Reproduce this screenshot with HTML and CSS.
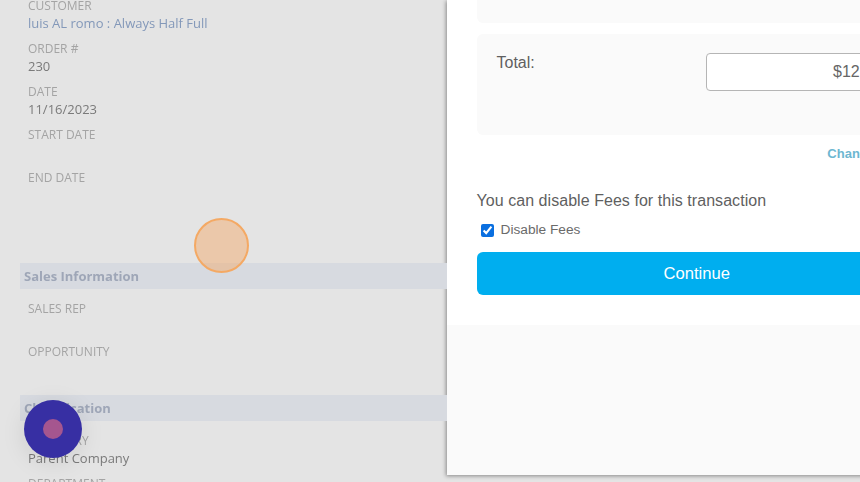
FILE: index.html
```html
<!DOCTYPE html>
<html>
<head>
    <title>Payment</title>
    <link rel="stylesheet" href="styles.css">
</head>
<body>
    <div class="record">
        <div class="field">
            <div class="label">CUSTOMER</div>
            <div class="value link">luis AL romo : Always Half Full</div>
        </div>
        <div class="field">
            <div class="label">ORDER #</div>
            <div class="value">230</div>
        </div>
        <div class="field">
            <div class="label">DATE</div>
            <div class="value">11/16/2023</div>
        </div>
        <div class="field">
            <div class="label">START DATE</div>
            <div class="value"></div>
        </div>
        <div class="field">
            <div class="label">END DATE</div>
            <div class="value"></div>
        </div>
        <div class="section section-first">Sales Information</div>
        <div class="field">
            <div class="label">SALES REP</div>
            <div class="value"></div>
        </div>
        <div class="field">
            <div class="label">OPPORTUNITY</div>
            <div class="value"></div>
        </div>
        <div class="section">Classification</div>
        <div class="field">
            <div class="label">CATEGORY</div>
            <div class="value">Parent Company</div>
        </div>
        <div class="field">
            <div class="label">DEPARTMENT</div>
            <div class="value"></div>
        </div>
    </div>

    <div class="modal">
        <div class="modal-body">
            <div class="panel panel-top"></div>
            <div class="panel panel-total">
                <div class="total-label">Total:</div>
                <input type="text" class="total-input" value="$12.00" readonly>
            </div>
            <div class="change"><a class="change-link">Change</a></div>
            <div class="fees-title">You can disable Fees for this transaction</div>
            <label class="fees-check"><input type="checkbox" checked>Disable Fees</label>
            <button type="button" class="submit">Continue</button>
        </div>
        <div class="modal-footer"></div>
    </div>

    <div class="click-marker"></div>
    <div class="help-bubble"><div class="help-dot"></div></div>
</body>
</html>
```

FILE: styles.css
```css
html, body {
    height: 100%;
}
body {
    background: #e4e4e4;
    display: flex;
    align-items: flex-start;
    height: 482px;
    margin: 0;
    overflow: hidden;
    position: relative;
}
.record {
    flex: none;
    width: 427px;
    margin-top: -3px;
    padding-left: 20px;
    font-family: "Open Sans", sans-serif;
    font-size: 13px;
    filter: blur(0.4px);
}
.field {
    height: 43px;
    padding-left: 8px;
}
.label {
    color: #a4a4a4;
    font-size: 12px;
    line-height: 18px;
}
.value {
    color: #7a7a7a;
    line-height: 17px;
    min-height: 17px;
}
.link {
    color: #8398b9;
}
.section {
    background: #d7dae0;
    color: #9ea6b7;
    font-weight: 700;
    height: 26px;
    line-height: 26px;
    margin: 9px 0 11px;
    padding-left: 4px;
}
.section-first {
    margin-top: 51px;
}
.modal {
    flex: none;
    width: 500px;
    height: 475px;
    background: #fff;
    box-shadow: -1px 1px 4px rgba(0, 0, 0, 0.4);
    font-family: "Liberation Sans", Arial, sans-serif;
    display: flex;
    flex-direction: column;
}
.modal-body {
    height: 325px;
    box-sizing: border-box;
    padding: 0 30px 0 29.5px;
}
.modal-footer {
    flex: 1;
    background: #fafafa;
}
.panel {
    background: #fafafa;
    border-radius: 6px;
}
.panel-top {
    height: 23px;
    border-radius: 0 0 6px 6px;
}
.panel-total {
    display: flex;
    justify-content: space-between;
    align-items: flex-start;
    height: 101px;
    box-sizing: border-box;
    margin-top: 11px;
    padding: 19px 20px;
}
.total-label {
    color: #5f5f5f;
    font-size: 16px;
    line-height: 20px;
}
.total-input {
    width: 191px;
    height: 38px;
    box-sizing: border-box;
    background: #fff;
    border: 1px solid #b5b5b5;
    border-radius: 4px;
    color: #666;
    font-family: "Liberation Sans", Arial, sans-serif;
    font-size: 16px;
    outline: 0;
    padding: 0 14px;
    text-align: right;
}
.change {
    margin-top: 10px;
    padding-right: 42px;
    text-align: right;
    line-height: 15px;
}
.change-link {
    color: #6db7d1;
    font-size: 13px;
    font-weight: 700;
}
.fees-title {
    color: #5f5f5f;
    font-size: 16px;
    letter-spacing: 0.05px;
    line-height: 18px;
    margin-top: 31px;
}
.fees-check {
    display: flex;
    align-items: center;
    color: #6a6a6a;
    font-size: 13.7px;
    line-height: 16px;
    margin-top: 12px;
}
.fees-check input {
    accent-color: #0a6fe0;
    margin: 0 7px 0 4px;
}
.submit {
    display: block;
    width: 100%;
    height: 43px;
    background: #00aeef;
    border: 0;
    border-radius: 6px;
    color: #fff;
    font-family: "Liberation Sans", Arial, sans-serif;
    font-size: 16.6px;
    margin-top: 14px;
}
.click-marker {
    position: absolute;
    left: 194px;
    top: 218px;
    width: 55px;
    height: 55px;
    box-sizing: border-box;
    background: rgba(244, 166, 100, 0.45);
    border: 2px solid #f4a964;
    border-radius: 50%;
}
.help-bubble {
    position: absolute;
    left: 24px;
    top: 400px;
    width: 58px;
    height: 58px;
    display: flex;
    align-items: center;
    justify-content: center;
    background: #372fa3;
    border-radius: 50%;
    box-shadow: 0 4px 24px rgba(0, 0, 0, 0.1);
}
.help-dot {
    width: 20px;
    height: 20px;
    background: #a5568f;
    border-radius: 50%;
}
```
